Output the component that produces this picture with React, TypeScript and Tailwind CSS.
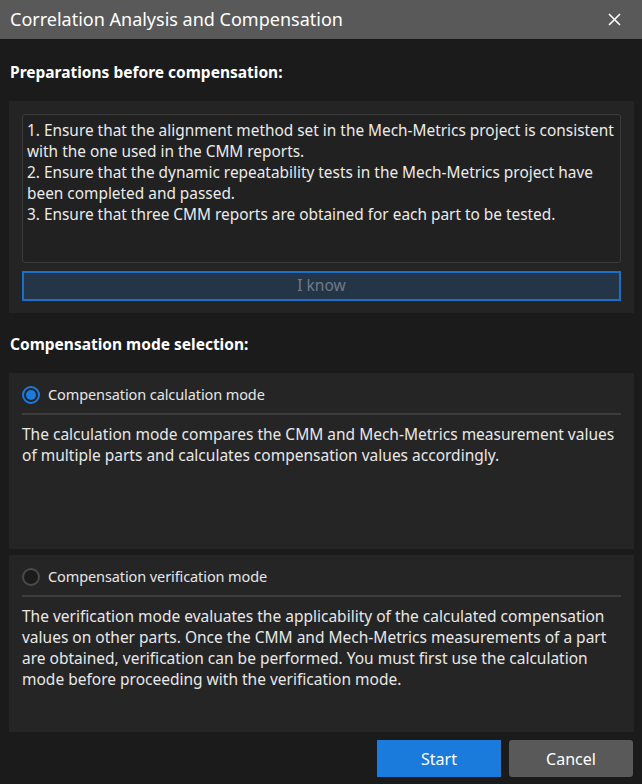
import React, { useState } from 'react';

const font = { fontFamily: '"Noto Sans", "Open Sans", sans-serif' };

interface ModeCardProps {
  label: string;
  description: string;
  checked: boolean;
  onSelect: () => void;
  height: string;
}

const ModeCard: React.FC<ModeCardProps> = ({ label, description, checked, onSelect, height }) => (
  <div className={`bg-[#252525] px-[13px] pt-[13px] ${height}`}>
    <button type="button" onClick={onSelect} className="flex items-center h-[18px] gap-[8px] text-[#e6e6e6] text-[14.5px]">
      {checked ? (
        <span className="w-[18px] h-[18px] rounded-full border-2 border-[#1a7ae0] flex items-center justify-center">
          <span className="w-[10px] h-[10px] rounded-full bg-[#1a7ae0]" />
        </span>
      ) : (
        <span className="w-[18px] h-[18px] rounded-full border-2 border-[#4a4a4a] bg-[#1c1c1c]" />
      )}
      <span className="tracking-[-0.1px]">{label}</span>
    </button>
    <div className="mt-[9px] h-[2px] bg-[#3c3c3c]" />
    <p className="mt-[9px] text-[15.5px] leading-[21px] text-[#e8e8e8]">{description}</p>
  </div>
);

export default function App() {
  const [mode, setMode] = useState<'calc' | 'verify'>('calc');

  return (
    <div style={font} className="w-[642px] h-[784px] bg-[#1b1b1b] flex flex-col overflow-hidden">
      <div className="h-[39px] bg-[#595959] flex items-center justify-between pl-[10px] pr-[21px] shrink-0">
        <span className="text-[18px] text-white">Correlation Analysis and Compensation</span>
        <svg width="13" height="13" viewBox="0 0 13 13" className="text-white">
          <path d="M1 1L12 12M12 1L1 12" stroke="currentColor" strokeWidth="1.6" />
        </svg>
      </div>

      <div className="flex flex-col pl-[9px] pr-[8px]">
        <h2 className="pl-[1px] pt-[22px] h-[62px] text-[15.5px] font-bold text-white">Preparations before compensation:</h2>

        <div className="bg-[#242424] px-[13px] pt-[13px] pb-[12px]">
          <div className="h-[149px] rounded-[3px] border border-[#3b3b3b] bg-[#212121] pl-[4px] pr-0 pt-[5px] text-[15.4px] leading-[21px] text-[#ebebeb]">
            <p>1. Ensure that the alignment method set in the Mech-Metrics project is consistent with the one used in the CMM reports.</p>
            <p>2. Ensure that the dynamic repeatability tests in the Mech-Metrics project have been completed and passed.</p>
            <p>3. Ensure that three CMM reports are obtained for each part to be tested.</p>
          </div>
          <button
            type="button"
            className="mt-[8px] w-full h-[30px] border-2 border-[#1c6fc9] bg-[#243548] text-[15.5px] text-[#6f7a88]"
          >
            I know
          </button>
        </div>

        <h2 className="pl-[1px] pt-[20px] h-[60px] text-[15.5px] font-bold text-white">Compensation mode selection:</h2>

        <div className="flex flex-col gap-[6px]">
          <ModeCard
            label="Compensation calculation mode"
            description="The calculation mode compares the CMM and Mech-Metrics measurement values of multiple parts and calculates compensation values accordingly."
            checked={mode === 'calc'}
            onSelect={() => setMode('calc')}
            height="h-[176px]"
          />
          <ModeCard
            label="Compensation verification mode"
            description="The verification mode evaluates the applicability of the calculated compensation values on other parts. Once the CMM and Mech-Metrics measurements of a part are obtained, verification can be performed. You must first use the calculation mode before proceeding with the verification mode."
            checked={mode === 'verify'}
            onSelect={() => setMode('verify')}
            height="h-[177px]"
          />
        </div>

        <div className="flex justify-end gap-[8px] mt-[8px] pr-[1px]">
          <button type="button" className="w-[124px] h-[37px] bg-[#1a7bdc] text-white text-[16px]">Start</button>
          <button type="button" className="w-[124px] h-[37px] rounded-[3px] bg-[#595959] text-white text-[16px]">Cancel</button>
        </div>
      </div>
    </div>
  );
}
